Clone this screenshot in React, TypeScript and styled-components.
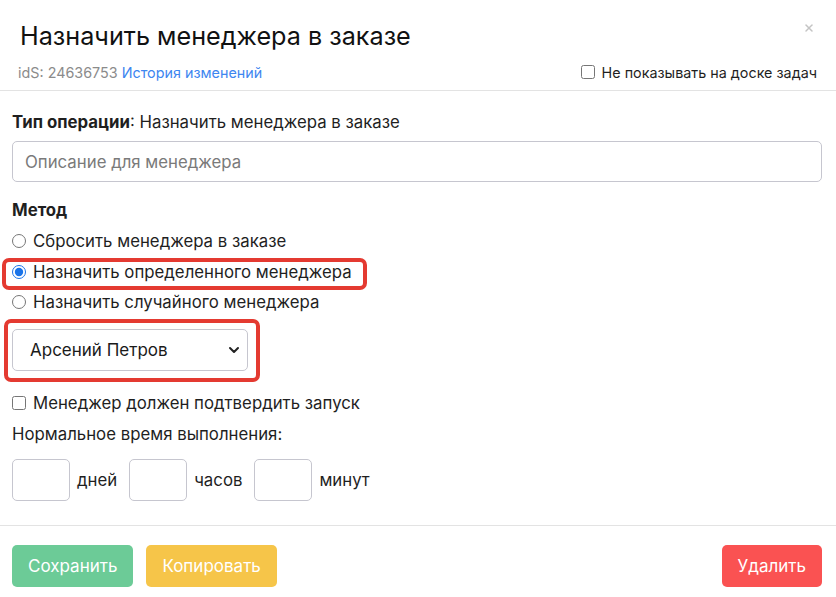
import React from "react";
import styled, { createGlobalStyle } from "styled-components";
import { ChevronDown, X } from "lucide-react";

const GlobalStyle = createGlobalStyle`
  * { box-sizing: border-box; }
  body {
    margin: 0;
    background: #ffffff;
    font-family: Inter, "Noto Sans", Arial, sans-serif;
    color: #1f1f1f;
  }
`;

export default function App() {
  return (
    <>
      <GlobalStyle />
      <Modal>
        <CloseButton aria-label="Закрыть">
          <X size={12} strokeWidth={3} color="#c4c4c4" />
        </CloseButton>
        <Header>
          <Title>Назначить менеджера в заказе</Title>
          <MetaRow>
            <Meta>
              idS: 24636753 <MetaLink href="#">История изменений</MetaLink>
            </Meta>
            <CheckLabel small>
              <Checkbox type="checkbox" />
              Не показывать на доске задач
            </CheckLabel>
          </MetaRow>
        </Header>

        <Body>
          <OperationLine>
            <b>Тип операции</b>: Назначить менеджера в заказе
          </OperationLine>
          <TextInput placeholder="Описание для менеджера" />

          <SectionTitle>Метод</SectionTitle>
          <RadioList>
            <RadioRow>
              <Radio type="radio" name="method" />
              Сбросить менеджера в заказе
            </RadioRow>
            <RadioRow highlighted>
              <Radio type="radio" name="method" defaultChecked />
              Назначить определенного менеджера
            </RadioRow>
            <RadioRow>
              <Radio type="radio" name="method" />
              Назначить случайного менеджера
            </RadioRow>
          </RadioList>

          <SelectFrame>
            <SelectBox>
              <SelectValue>Арсений Петров</SelectValue>
              <ChevronDown size={16} strokeWidth={3} color="#222" />
            </SelectBox>
          </SelectFrame>

          <CheckLabel>
            <Checkbox type="checkbox" />
            Менеджер должен подтвердить запуск
          </CheckLabel>
          <PlainLine>Нормальное время выполнения:</PlainLine>

          <TimeRow>
            <TimeInput />
            <TimeUnit>дней</TimeUnit>
            <TimeInput />
            <TimeUnit>часов</TimeUnit>
            <TimeInput />
            <TimeUnit>минут</TimeUnit>
          </TimeRow>
        </Body>

        <Footer>
          <Button tone="#6ccb97">Сохранить</Button>
          <Button tone="#f6c549">Копировать</Button>
          <Spacer />
          <Button tone="#fa5252">Удалить</Button>
        </Footer>
      </Modal>
    </>
  );
}

const Modal = styled.div`
  position: relative;
  width: 836px;
  height: 597px;
  background: #fff;
  display: flex;
  flex-direction: column;
`;

const CloseButton = styled.button`
  position: absolute;
  top: 22px;
  right: 21px;
  border: 0;
  background: none;
  padding: 0;
  display: flex;
`;

const Header = styled.div`
  padding: 21px 20px 8px 20px;
  border-bottom: 1px solid #e3e3e3;
`;

const Title = styled.h1`
  margin: 0 0 10px 0;
  font-size: 25.2px;
  font-weight: 400;
  line-height: 31px;
  color: #111;
`;

const MetaRow = styled.div`
  display: flex;
  justify-content: space-between;
  align-items: center;
  height: 20px;
  margin-left: -2px;
  margin-right: -1px;
`;

const Meta = styled.span`
  font-size: 14.35px;
  color: #8b8b8b;
`;

const MetaLink = styled.a`
  color: #3d86f0;
  text-decoration: none;
`;

const Body = styled.div`
  padding: 21px 14px 0 12px;
  display: flex;
  flex-direction: column;
  align-items: flex-start;
  flex: 1;
  border-bottom: 1px solid #e3e3e3;
  font-size: 16.8px;
`;

const OperationLine = styled.div`
  line-height: 20px;
  b { font-weight: 700; }
`;

const TextInput = styled.input`
  margin-top: 9px;
  width: 810px;
  height: 41px;
  border: 1px solid #c6c6cf;
  border-radius: 5px;
  padding: 0 12px;
  font-family: inherit;
  font-size: 16.8px;
  &::placeholder { color: #7a7a7a; }
`;

const SectionTitle = styled.div`
  margin-top: 18px;
  line-height: 20px;
  font-weight: 700;
`;

const RadioList = styled.div`
  margin-top: 6px;
  display: flex;
  flex-direction: column;
`;

const RadioRow = styled.label<{ highlighted?: boolean }>`
  position: relative;
  display: inline-flex;
  align-items: center;
  height: 30.5px;
  gap: 7px;
  align-self: flex-start;
  &::after {
    content: "";
    display: ${({ highlighted }) => (highlighted ? "block" : "none")};
    position: absolute;
    left: -10px;
    right: -15px;
    top: 1px;
    bottom: -3px;
    border: 4px solid #e43a31;
    border-radius: 7px;
    pointer-events: none;
  }
`;

const Radio = styled.input`
  margin: 0;
  width: 14px;
  height: 14px;
  accent-color: #1a73e8;
`;

const SelectFrame = styled.div`
  margin-top: 1px;
  margin-left: -8px;
  padding: 6px 8px 7px 4px;
  border: 4px solid #e43a31;
  border-radius: 7px;
`;

const SelectBox = styled.div`
  width: 236px;
  height: 42px;
  border: 1px solid #c6c6cf;
  border-radius: 5px;
  display: flex;
  align-items: center;
  justify-content: space-between;
  padding: 0 5px 0 17px;
`;

const SelectValue = styled.span`
  font-size: 17px;
  color: #1a1a1a;
`;

const CheckLabel = styled.label<{ small?: boolean }>`
  display: inline-flex;
  align-items: center;
  gap: 7px;
  font-size: ${({ small }) => (small ? "14.35px" : "16.8px")};
  color: #1f1f1f;
  margin-top: ${({ small }) => (small ? "0" : "11px")};
  height: 20px;
`;

const Checkbox = styled.input`
  margin: 0;
  width: 14px;
  height: 14px;
`;

const PlainLine = styled.div`
  margin-top: 11px;
  line-height: 20px;
`;

const TimeRow = styled.div`
  margin-top: 15px;
  display: flex;
  align-items: center;
`;

const TimeInput = styled.input`
  width: 58px;
  height: 42px;
  border: 1px solid #c6c6cf;
  border-radius: 5px;
  margin-right: 7px;
`;

const TimeUnit = styled.span`
  margin-right: 12px;
`;

const Footer = styled.div`
  display: flex;
  align-items: center;
  gap: 13px;
  padding: 19px 14px 10px 12px;
`;

const Spacer = styled.div`
  flex: 1;
`;

const Button = styled.button<{ tone: string }>`
  height: 42px;
  padding: 0 16px;
  border: 0;
  border-radius: 5px;
  background: ${({ tone }) => tone};
  color: #fff;
  font-family: inherit;
  font-size: 17px;
`;
